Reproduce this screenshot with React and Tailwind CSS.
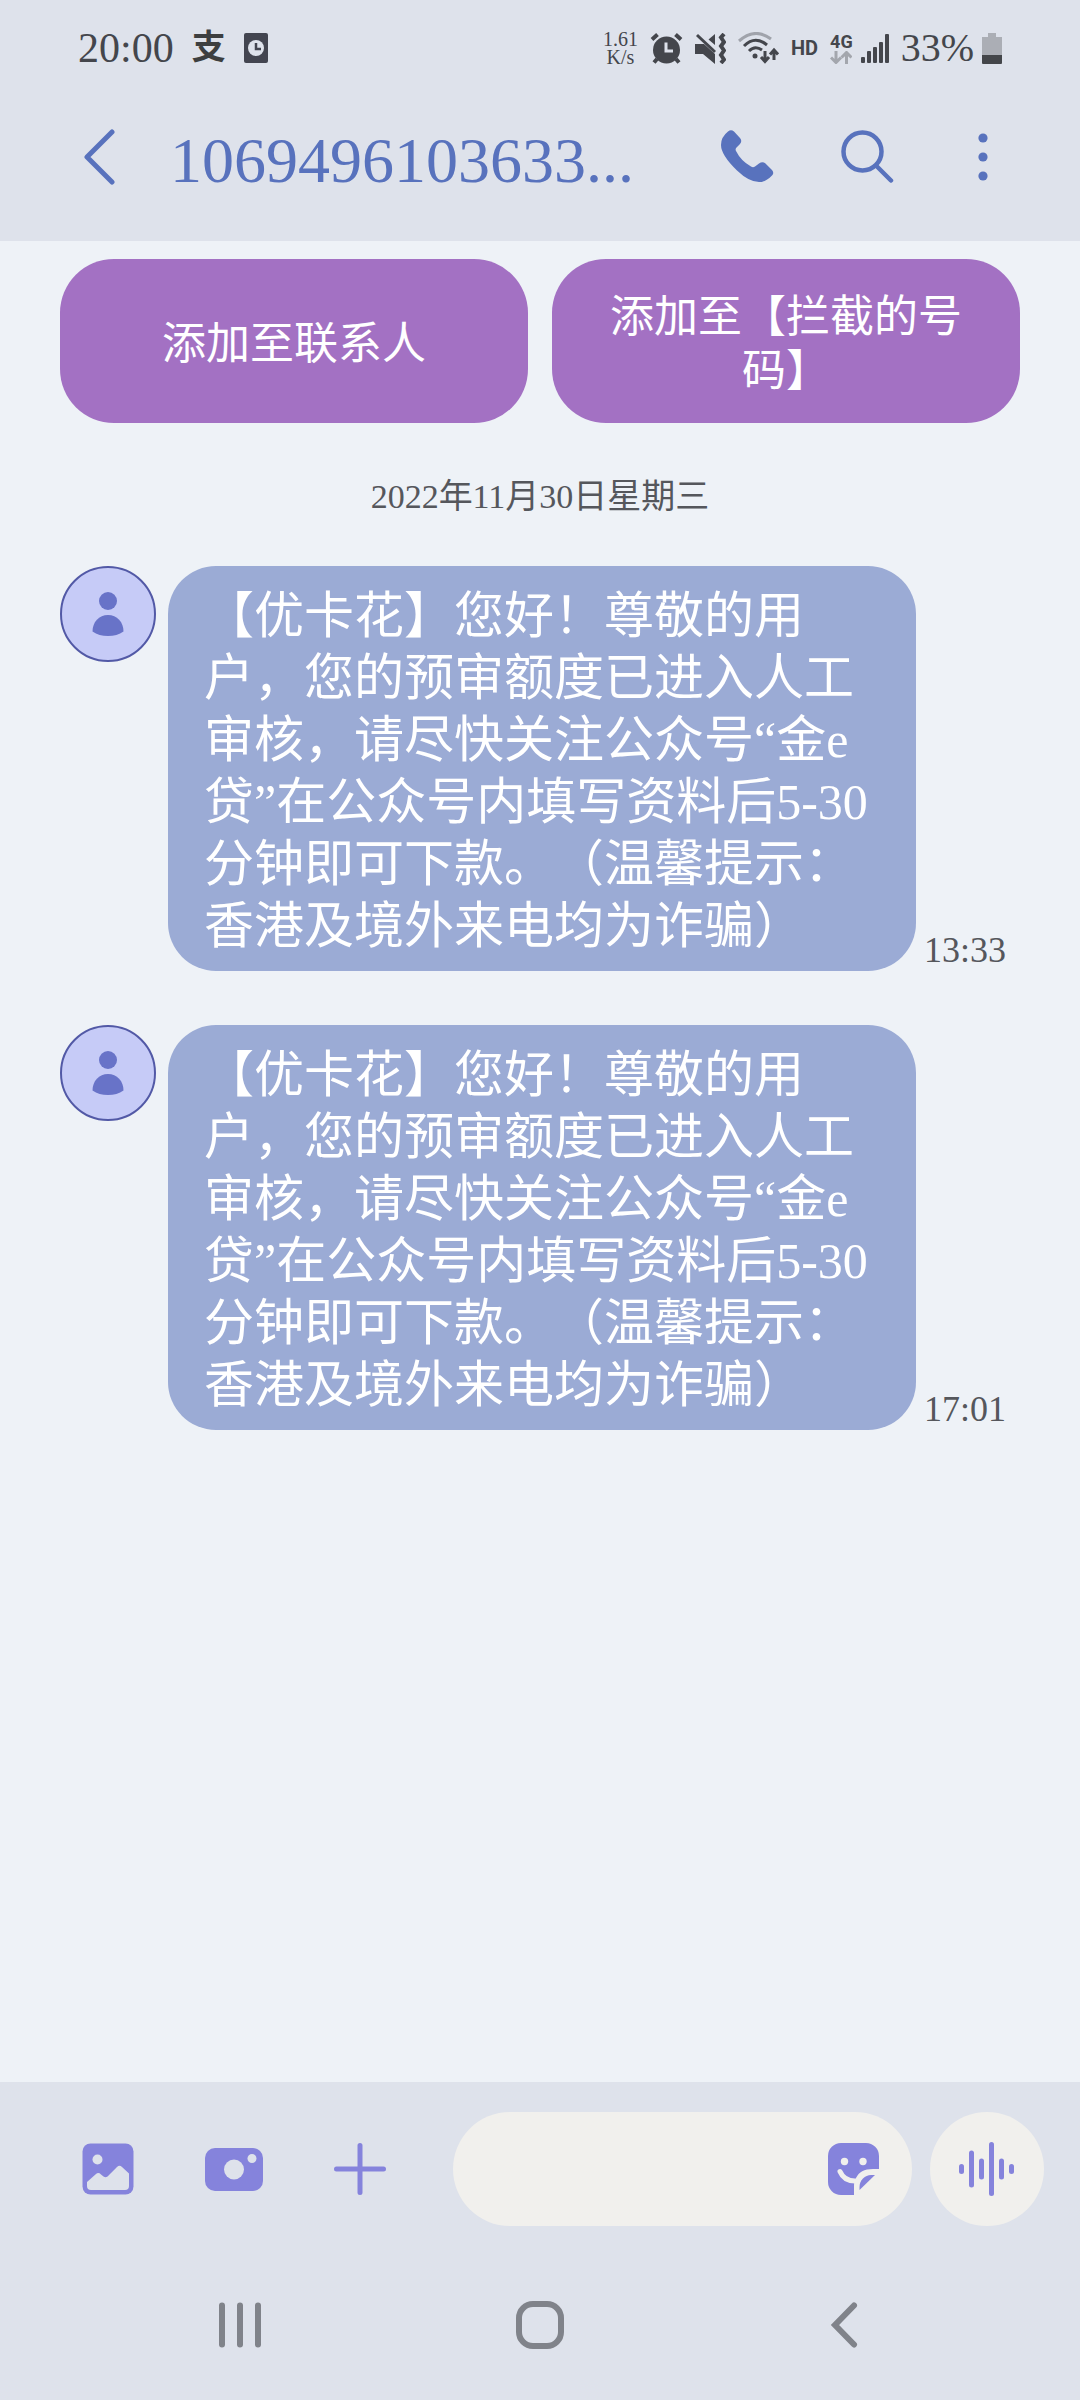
import React, { useState } from 'react';

const MESSAGE = '【优卡花】您好！尊敬的用户，您的预审额度已进入人工审核，请尽快关注公众号“金e贷”在公众号内填写资料后5-30分钟即可下款。（温馨提示：香港及境外来电均为诈骗）';

const messages = [
    { id: 1, text: MESSAGE, time: '13:33' },
    { id: 2, text: MESSAGE, time: '17:01' },
];

const AlarmIcon = () => (
    <svg width="33" height="31" viewBox="0 0 33 31" fill="currentColor">
        <circle cx="16.500" cy="17" r="13.500" />
        <path d="M2 6.500L7.500 1.500M31 6.500L25.500 1.500M7 26L4 29.500M26 26L29 29.500" stroke="currentColor" strokeWidth="4" />
        <path d="M16 9.500V18H23" fill="none" stroke="#dee2eb" strokeWidth="3" />
    </svg>
);

const MuteIcon = () => (
    <svg width="31" height="31" viewBox="0 0 31 31" fill="currentColor">
        <path d="M0 11H9L20 21V31L8 21H0ZM20 1V12L13.500 6.500Z" />
        <path d="M2 2L20 19" fill="none" stroke="currentColor" strokeWidth="3" />
        <path d="M29 1L26 4.500L29 9L26 13L29 17.500L26 22L29 26.500L26 30" fill="none" stroke="currentColor" strokeWidth="4" />
    </svg>
);

const WifiIcon = () => (
    <svg width="41" height="32" viewBox="0 0 41 32" fill="none" stroke="currentColor">
        <path d="M1 9Q17 -5 33 7" strokeWidth="3" opacity="0.4" />
        <path d="M6 14Q17 3 29 13" strokeWidth="3" />
        <path d="M11 19Q17 13 24 18" strokeWidth="3" />
        <circle cx="17" cy="24" r="2.500" fill="currentColor" stroke="none" />
        <path d="M27 19V29M23 25L27 29.500L31 25M36 28V19M32 22.500L36 18L40 22.500" strokeWidth="3" />
    </svg>
);

const SignalIcon = () => (
    <svg width="28" height="29" viewBox="0 0 28 29" fill="currentColor">
        <rect x="0" y="23" width="4" height="6" rx="1" />
        <rect x="6" y="17" width="4" height="12" rx="1" />
        <rect x="12" y="13" width="4" height="16" rx="1" />
        <rect x="18" y="8" width="4" height="21" rx="1" />
        <rect x="24" y="0" width="4" height="29" rx="1" />
    </svg>
);

const StatusBar = () => (
    <div className="flex items-center justify-between h-[96px] pl-[78px] pr-[78px] text-[#44464c]">
        <div className="flex items-center">
            <span className="text-[42px] leading-[48px]">20:00</span>
            <span className="ml-[18px] font-bold text-[34px] leading-[48px] text-[#3d3f40]">支</span>
            <svg className="ml-[18px]" width="24" height="30" viewBox="0 0 24 30">
                <rect width="24" height="30" rx="2" fill="#434550" />
                <circle cx="12" cy="15" r="8" fill="#dee2eb" />
                <path d="M12 10V16H17" fill="none" stroke="#434550" strokeWidth="2.500" />
            </svg>
        </div>
        <div className="flex items-center">
            <div className="text-[20px] leading-[18px] text-center">
                <div>1.61</div>
                <div>K/s</div>
            </div>
            <div className="flex items-center gap-3 ml-3">
                <AlarmIcon />
                <MuteIcon />
                <WifiIcon />
            </div>
            <span className="ml-3 font-[Roboto,sans-serif] font-bold text-[20px] leading-6">HD</span>
            <div className="flex flex-col items-center ml-3 font-[Roboto,sans-serif] font-bold text-[18px] leading-[18px]">
                <span>4G</span>
                <svg width="22" height="13" viewBox="0 0 22 13" fill="none" stroke="#a3a6ad" strokeWidth="3">
                    <path d="M6 0V11M1 6.500L6 11.500L11 6.500M16.500 13V2M11.500 6.500L16.500 1.500L21.500 6.500" />
                </svg>
            </div>
            <div className="ml-2"><SignalIcon /></div>
            <span className="ml-3 text-[40px] leading-[48px]">33%</span>
            <svg className="ml-2" width="20" height="31" viewBox="0 0 20 31">
                <path d="M6 0H14V4H20V22H0V4H6Z" fill="#abaeb5" />
                <path d="M0 22H20V30Q20 31 19 31H1Q0 31 0 30Z" fill="#44464a" />
            </svg>
        </div>
    </div>
);

const Header = () => (
    <header className="bg-[#dee2eb]">
        <StatusBar />
        <div className="flex items-center h-[145px] pb-6 pl-[84px] pr-[92px] text-[#5872bd]">
            <button type="button" aria-label="返回" className="shrink-0">
                <svg width="32" height="56" viewBox="0 0 32 56" fill="none" stroke="currentColor" strokeWidth="5" strokeLinecap="round" strokeLinejoin="round">
                    <path d="M28 3L3 28L28 53" />
                </svg>
            </button>
            <h1 className="flex-1 ml-[54px] pt-2 text-[64px] leading-[72px] whitespace-nowrap">1069496103633...</h1>
            <div className="flex items-center shrink-0">
                <button type="button" aria-label="拨打电话">
                    <svg width="53" height="53" viewBox="0 0 53 53" fill="currentColor">
                        <path d="M7 1.500Q10 -1 13 1.500L19 8Q21.500 11 19 14L15.500 17.500Q14 19 15 21Q20 31 30 36.500Q32 38 34 36.500L38 33.500Q41.500 31 44.500 33.500L51 40Q53.500 43 51 45.500Q45 52 38 52Q28 52 16 40.500Q0 25 0 15Q0 7 7 1.500Z" />
                    </svg>
                </button>
                <button type="button" aria-label="搜索" className="ml-[67px]">
                    <svg width="53" height="53" viewBox="0 0 53 53" fill="none" stroke="currentColor" strokeWidth="4.500" strokeLinecap="round">
                        <circle cx="21.500" cy="21.500" r="19" />
                        <path d="M35.500 36L50 50.500" />
                    </svg>
                </button>
                <button type="button" aria-label="更多选项" className="ml-[84px]">
                    <svg width="10" height="48" viewBox="0 0 10 48" fill="currentColor">
                        <circle cx="5" cy="5" r="4.600" />
                        <circle cx="5" cy="24" r="4.600" />
                        <circle cx="5" cy="43" r="4.600" />
                    </svg>
                </button>
            </div>
        </div>
    </header>
);

const ActionButton = ({ children }) => (
    <button type="button" className="flex-1 flex items-center justify-center min-h-[164px] px-[40px] pt-2 rounded-[54px] bg-[#a371c3] text-white text-[44px] leading-[54px] text-center">
        {children}
    </button>
);

const Avatar = () => (
    <div className="shrink-0 flex items-center justify-center size-[96px] rounded-full border-2 border-[#5259a6] bg-[#c6cbf7]">
        <svg width="32" height="46" viewBox="0 0 32 46" fill="#6873c8">
            <circle cx="16" cy="10" r="9" />
            <path d="M0.500 40.500C0.500 31 7 24 16 24S31.500 31 31.500 40.500Q25 45 16 45T0.500 40.500Z" />
        </svg>
    </div>
);

const Message = ({ text, time }) => (
    <div className="flex">
        <Avatar />
        <p className="flex-1 ml-3 px-[36px] pt-[19px] pb-[14px] rounded-[48px] bg-[#9babd5] text-white text-[50px] leading-[62px] [text-spacing-trim:space-all]">
            {text}
        </p>
        <time className="self-end shrink-0 w-[104px] pl-2 text-[36px] leading-[42px] text-[#55575c]">{time}</time>
    </div>
);

const Composer = () => {
    const [draft, setDraft] = useState('');

    return (
        <div className="flex items-center pt-[30px] pl-[82px] pr-[36px] text-[#8583dc]">
            <button type="button" aria-label="图库" className="shrink-0">
                <svg width="52" height="52" viewBox="0 0 52 52">
                    <rect x="0.500" y="0.500" width="51" height="51" rx="8" fill="currentColor" />
                    <circle cx="15.500" cy="16.500" r="5" fill="#dee2eb" />
                    <path d="M5 39L14 31Q16.500 29 19 31.500L21.500 33.500Q23.500 35 25.500 33.500L35 24Q37.500 21.500 40 24L47 30.500V43Q47 47 43 47H9Q5 47 5 43Z" fill="#dee2eb" />
                </svg>
            </button>
            <button type="button" aria-label="相机" className="shrink-0 ml-[71px]">
                <svg width="58" height="43" viewBox="0 0 58 43">
                    <rect width="58" height="43" rx="10" fill="currentColor" />
                    <circle cx="29" cy="21.500" r="10" fill="#dee2eb" />
                    <circle cx="47" cy="10.500" r="4.500" fill="#dee2eb" />
                </svg>
            </button>
            <button type="button" aria-label="添加附件" className="shrink-0 ml-[71px]">
                <svg width="52" height="52" viewBox="0 0 52 52" stroke="currentColor" strokeWidth="5" strokeLinecap="round">
                    <path d="M26 2.500V49.500M2.500 26H49.500" />
                </svg>
            </button>
            <div className="flex flex-1 items-center min-w-0 h-[114px] ml-[67px] pl-10 pr-8 rounded-full bg-[#f1f0ed]">
                <input
                    type="text"
                    aria-label="输入信息"
                    value={draft}
                    onChange={(e) => setDraft(e.target.value)}
                    className="flex-1 min-w-0 bg-transparent text-[44px] text-[#44464c] outline-none"
                />
                <button type="button" aria-label="贴纸" className="shrink-0">
                    <svg width="52" height="52" viewBox="0 0 52 52" fill="currentColor">
                        <path d="M13 0H38A13 13 0 0 1 51 13V26H45C36 26 31 29 28 35C26 38 26 41 26 44V52H13A13 13 0 0 1 0 39V13A13 13 0 0 1 13 0Z" />
                        <circle cx="16.500" cy="18.500" r="3.700" fill="#f1f0ed" />
                        <circle cx="35" cy="18.500" r="3.700" fill="#f1f0ed" />
                        <path d="M12 28.500Q16 38 27 38" fill="none" stroke="#f1f0ed" strokeWidth="5" strokeLinecap="round" />
                        <path d="M31.500 47V44C31.500 37 37 32 43 32H47Z" />
                    </svg>
                </button>
            </div>
            <button type="button" aria-label="语音信息" className="shrink-0 flex items-center justify-center size-[114px] ml-[18px] rounded-full bg-[#f1f0ed]">
                <svg width="56" height="54" viewBox="0 0 56 54" fill="currentColor">
                    <rect x="0" y="22" width="5" height="10" rx="2.500" />
                    <rect x="10" y="8.500" width="5" height="37" rx="2.500" />
                    <rect x="20" y="16.500" width="5" height="21" rx="2.500" />
                    <rect x="30" y="0" width="5" height="54" rx="2.500" />
                    <rect x="40" y="16.500" width="5" height="21" rx="2.500" />
                    <rect x="50" y="22" width="5" height="10" rx="2.500" />
                </svg>
            </button>
        </div>
    );
};

const SystemNav = () => (
    <nav className="flex items-center justify-between h-[174px] pt-6 px-[218px] text-[#80838a]">
        <button type="button" aria-label="最近任务">
            <svg width="44" height="46" viewBox="0 0 44 46" stroke="currentColor" strokeWidth="6" strokeLinecap="round">
                <path d="M4 3.500V42.500M22 3.500V42.500M40 3.500V42.500" />
            </svg>
        </button>
        <button type="button" aria-label="主屏幕">
            <svg width="48" height="48" viewBox="0 0 48 48" fill="none" stroke="currentColor" strokeWidth="6">
                <rect x="3" y="3" width="42" height="42" rx="14" />
            </svg>
        </button>
        <button type="button" aria-label="返回上一页">
            <svg width="44" height="46" viewBox="0 0 44 46" fill="none" stroke="currentColor" strokeWidth="6" strokeLinecap="round">
                <path d="M36 3.500L17 23L36 42.500" />
            </svg>
        </button>
    </nav>
);

const App = () => (
    <div className="flex flex-col min-h-screen bg-[#eef2f7] font-['Liberation_Serif','Noto_Sans_CJK_SC',serif]" lang="zh-CN">
        <Header />
        <main className="flex-1 px-[60px] pt-[18px]">
            <div className="flex gap-6">
                <ActionButton>添加至联系人</ActionButton>
                <ActionButton>添加至【拦截的号码】</ActionButton>
            </div>
            <div className="mt-[52px] mb-[47px] text-center text-[34px] leading-[44px] text-[#55575c]">2022年11月30日星期三</div>
            <div className="flex flex-col gap-[54px]">
                {messages.map((m) => (
                    <Message key={m.id} text={m.text} time={m.time} />
                ))}
            </div>
        </main>
        <footer className="bg-[#dee2eb]">
            <Composer />
            <SystemNav />
        </footer>
    </div>
);

export default App;
